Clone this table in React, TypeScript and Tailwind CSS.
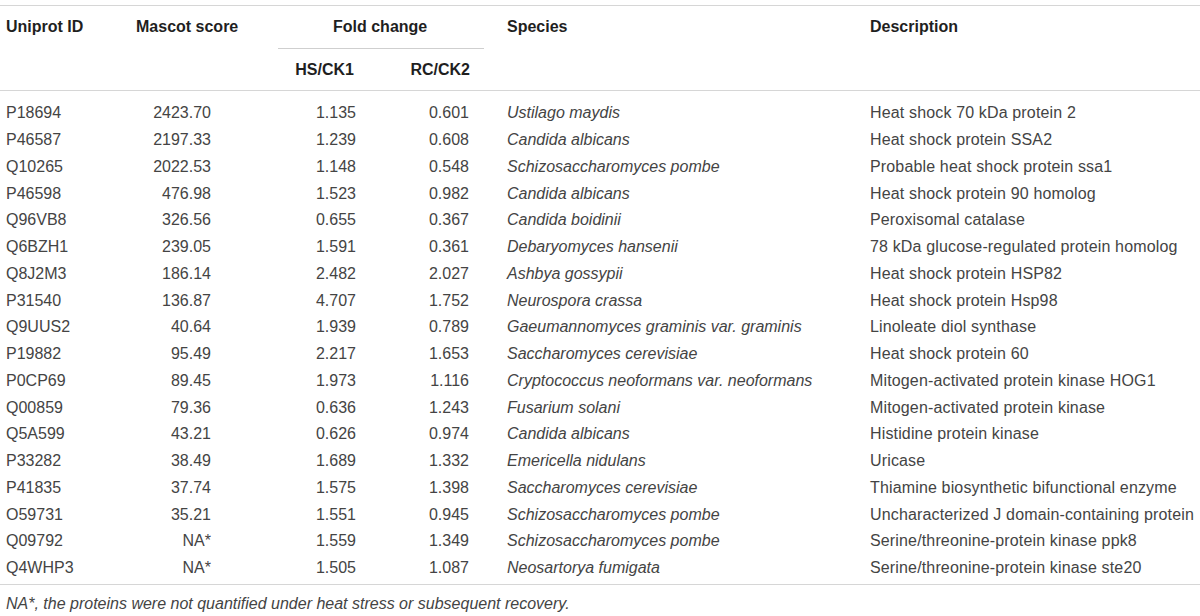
const rows = [
  ["P18694", "2423.70", "1.135", "0.601", "Ustilago maydis", "Heat shock 70 kDa protein 2"],
  ["P46587", "2197.33", "1.239", "0.608", "Candida albicans", "Heat shock protein SSA2"],
  ["Q10265", "2022.53", "1.148", "0.548", "Schizosaccharomyces pombe", "Probable heat shock protein ssa1"],
  ["P46598", "476.98", "1.523", "0.982", "Candida albicans", "Heat shock protein 90 homolog"],
  ["Q96VB8", "326.56", "0.655", "0.367", "Candida boidinii", "Peroxisomal catalase"],
  ["Q6BZH1", "239.05", "1.591", "0.361", "Debaryomyces hansenii", "78 kDa glucose-regulated protein homolog"],
  ["Q8J2M3", "186.14", "2.482", "2.027", "Ashbya gossypii", "Heat shock protein HSP82"],
  ["P31540", "136.87", "4.707", "1.752", "Neurospora crassa", "Heat shock protein Hsp98"],
  ["Q9UUS2", "40.64", "1.939", "0.789", "Gaeumannomyces graminis var. graminis", "Linoleate diol synthase"],
  ["P19882", "95.49", "2.217", "1.653", "Saccharomyces cerevisiae", "Heat shock protein 60"],
  ["P0CP69", "89.45", "1.973", "1.116", "Cryptococcus neoformans var. neoformans", "Mitogen-activated protein kinase HOG1"],
  ["Q00859", "79.36", "0.636", "1.243", "Fusarium solani", "Mitogen-activated protein kinase"],
  ["Q5A599", "43.21", "0.626", "0.974", "Candida albicans", "Histidine protein kinase"],
  ["P33282", "38.49", "1.689", "1.332", "Emericella nidulans", "Uricase"],
  ["P41835", "37.74", "1.575", "1.398", "Saccharomyces cerevisiae", "Thiamine biosynthetic bifunctional enzyme"],
  ["O59731", "35.21", "1.551", "0.945", "Schizosaccharomyces pombe", "Uncharacterized J domain-containing protein"],
  ["Q09792", "NA*", "1.559", "1.349", "Schizosaccharomyces pombe", "Serine/threonine-protein kinase ppk8"],
  ["Q4WHP3", "NA*", "1.505", "1.087", "Neosartorya fumigata", "Serine/threonine-protein kinase ste20"],
]

// column tracks: id | mascot | hs/ck1 | rc/ck2 | species | description
const cols = "grid grid-cols-[130px_120px_110px_141px_363px_1fr]"

export default function App() {
  return (
    <div className="w-[1200px] h-[616px] bg-white pt-[5px] font-['Liberation_Sans',Arial,sans-serif] text-[16px] leading-[18px] text-[#444]">
      {/* header */}
      <div className={`${cols} border-y border-[#d6d6d6] font-bold text-[#1f1f1f]`}>
        <div className="row-span-2 pl-[6px] pt-[12px]">Uniprot ID</div>
        <div className="row-span-2 pl-[6px] pt-[12px]">Mascot score</div>
        <div className="col-span-2 h-[43px] flex flex-col justify-between">
          <div className="pl-[83px] pt-[12px]">Fold change</div>
          <div className="ml-[28px] mr-[17px] border-b border-[#cfcfcf]" />
        </div>
        <div className="row-span-2 pl-[6px] pt-[12px]">Species</div>
        <div className="row-span-2 pl-[6px] pt-[12px]">Description</div>
        <div className="h-[41px] flex items-center justify-end pr-[6px]">HS/CK1</div>
        <div className="h-[41px] flex items-center justify-end pr-[31px]">RC/CK2</div>
      </div>

      {/* body */}
      <div className="border-b border-[#d6d6d6] pt-[9px] pb-[2px]">
        {rows.map((r) => (
          <div key={r[0]} className={`${cols} h-[26.76px] items-center`}>
            <div className="pl-[6px]">{r[0]}</div>
            <div className="text-right pr-[39px]">{r[1]}</div>
            <div className="text-right pr-[4px]">{r[2]}</div>
            <div className="text-right pr-[32px]">{r[3]}</div>
            <div className="pl-[6px] italic whitespace-nowrap">{r[4]}</div>
            <div className="pl-[6px] whitespace-nowrap tracking-[0.15px]">{r[5]}</div>
          </div>
        ))}
      </div>

      <p className="mt-[10px] pl-[6px] italic">
        NA*, the proteins were not quantified under heat stress or subsequent recovery.
      </p>
    </div>
  )
}
